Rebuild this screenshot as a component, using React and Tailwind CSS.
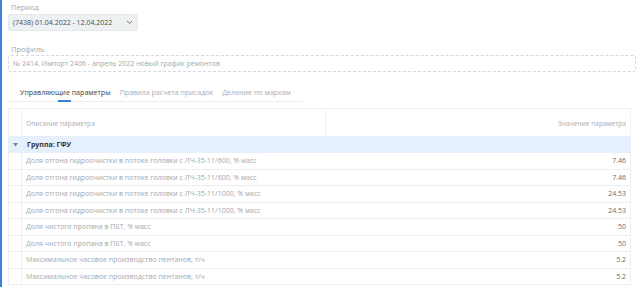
import React from "react";

const rows = [
  ["Доля отгона гидроочистки в потоке головки с ЛЧ-35-11/600, % масс", "7.46"],
  ["Доля отгона гидроочистки в потоке головки с ЛЧ-35-11/600, % масс", "7.46"],
  ["Доля отгона гидроочистки в потоке головки с ЛЧ-35-11/1000, % масс", "24.53"],
  ["Доля отгона гидроочистки в потоке головки с ЛЧ-35-11/1000, % масс", "24.53"],
  ["Доля чистого пропана в ПБТ, % масс", "50"],
  ["Доля чистого пропана в ПБТ, % масс", "50"],
  ["Максимальное часовое производство пентанов, т/ч", "5.2"],
  ["Максимальное часовое производство пентанов, т/ч", "5.2"],
];

export default function App() {
  return (
    <div
      className="w-[643px] h-[287px] overflow-hidden bg-white border-l-2 border-[#3d7fd9] flex flex-col leading-none"
      style={{ fontFamily: '"Open Sans", "Noto Sans", sans-serif' }}
    >
      <div className="pl-[6px] pr-[7px] flex flex-col">
        <div className="h-[14px] flex items-center pl-[3px] pt-[1px]">
          <span className="text-[7.5px] text-[#a5a9ae] whitespace-nowrap">Период</span>
        </div>
        <div className="w-[130px] h-[17px] rounded-[3px] bg-[#eff0f2] border border-dotted border-[#dcdee2] flex items-center pl-[4px] pr-[4px] justify-between">
          <span className="text-[7px] text-[#4a4d52] whitespace-nowrap">(7438) 01.04.2022 - 12.04.2022</span>
          <svg width="7" height="5" viewBox="0 0 7 5" className="shrink-0">
            <path d="M1 1 L3.5 3.5 L6 1" fill="none" stroke="#6b6f75" strokeWidth="0.9" />
          </svg>
        </div>
        <div className="h-[24px] flex items-end pb-[2px] pl-[3px]">
          <span className="text-[7.5px] text-[#a5a9ae] whitespace-nowrap">Профиль</span>
        </div>
        <div className="h-[17px] rounded-[3px] border border-dashed border-[#d6d8dc] flex items-center pl-[4px]">
          <span className="text-[7px] text-[#a5a8ad] whitespace-nowrap">№ 2414. Импорт 2406 - апрель 2022 новый график ремонтов</span>
        </div>
        <div className="mt-[15px] w-[295px] h-[15px] border-b border-[#eceef0] flex gap-[9px] pl-[12px] pt-[2px] items-start">
          <div className="relative h-full shrink-0 flex items-start">
            <span className="text-[7.1px] text-[#3f4247] whitespace-nowrap">Управляющие параметры</span>
            <div className="absolute left-[38px] bottom-[-1px] w-[13px] h-[2px] bg-[#3d7fd9] z-10" />
          </div>
          <span className="text-[7.1px] text-[#a9adb2] whitespace-nowrap shrink-0">Правила расчета присадок</span>
          <span className="text-[7.1px] text-[#a9adb2] whitespace-nowrap shrink-0">Деление по маркам</span>
        </div>
        <div className="mt-[6px] w-[623px] flex flex-col">
          <div className="h-[28px] flex border border-[#eef0f2] border-b-0">
            <div className="w-[13px] border-r border-[#eef0f2]" />
            <div className="w-[304px] border-r border-[#eef0f2] flex items-end pb-[8px] pl-[4px]">
              <span className="text-[6.6px] text-[#a9adb2] whitespace-nowrap">Описание параметра</span>
            </div>
            <div className="flex-1 flex items-end justify-end pb-[8px] pr-[4px]">
              <span className="text-[6.6px] text-[#a9adb2] whitespace-nowrap">Значение параметра</span>
            </div>
          </div>
          <div className="h-[17px] bg-[#e6f0fd] flex items-center">
            <div className="w-[15px] flex justify-center">
              <svg width="5" height="4" viewBox="0 0 5 4">
                <path d="M0 0 L5 0 L2.5 3.5 Z" fill="#7e8794" />
              </svg>
            </div>
            <span className="pl-[4px] text-[7px] font-bold text-[#33363a] whitespace-nowrap">Группа: ГФУ</span>
          </div>
          {rows.map(([label, value], i) => (
            <div key={i} className="h-[16.5px] flex items-center border-b border-[#eceef0] border-l border-r border-l-[#eef0f2] border-r-[#eef0f2]">
              <div className="w-[13px] self-stretch border-r border-[#eef0f2]" />
              <span className="pl-[4px] text-[7px] text-[#a4a8ad] whitespace-nowrap">{label}</span>
              <span className="ml-auto pr-[4px] text-[7px] text-[#6a6d72]">{value}</span>
            </div>
          ))}
        </div>
      </div>
    </div>
  );
}
